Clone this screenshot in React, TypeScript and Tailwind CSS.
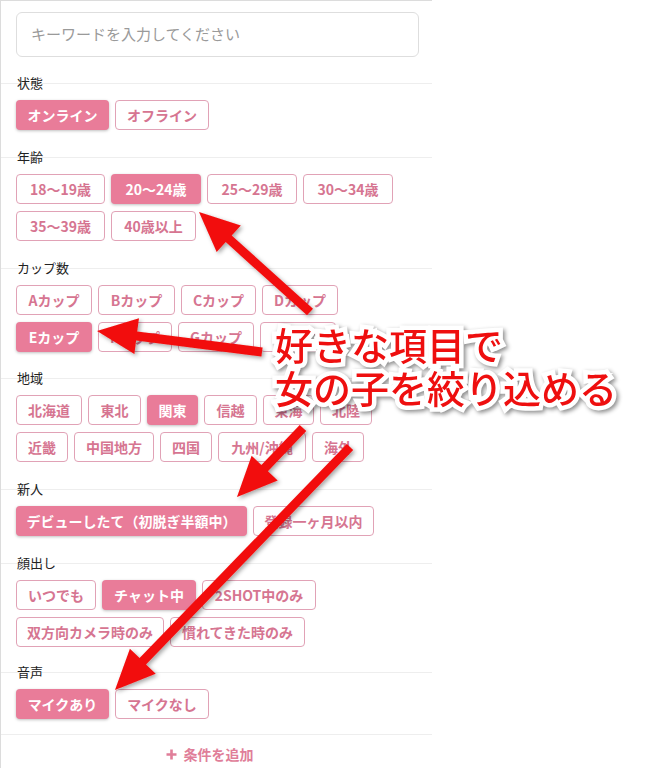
import React from "react";

type Btn = [string, string, boolean?];

const sections: { label: string; pb: string; rows: Btn[][] }[] = [
  {
    label: "状態",
    pb: "pb-[27px]",
    rows: [[["オンライン", "w-[93px]", true], ["オフライン", "w-[94px]"]]],
  },
  {
    label: "年齢",
    pb: "pb-[27px]",
    rows: [
      [
        ["18〜19歳", "w-[89px]"],
        ["20〜24歳", "w-[90px]", true],
        ["25〜29歳", "w-[90px]"],
        ["30〜34歳", "w-[90px]"],
      ],
      [
        ["35〜39歳", "w-[89px]"],
        ["40歳以上", "w-[85px]"],
      ],
    ],
  },
  {
    label: "カップ数",
    pb: "pb-[26px]",
    rows: [
      [
        ["Aカップ", "w-[76px]"],
        ["Bカップ", "w-[77px]"],
        ["Cカップ", "w-[75px]"],
        ["Dカップ", "w-[76px]"],
      ],
      [
        ["Eカップ", "w-[76px]", true],
        ["Fカップ", "w-[74px]"],
        ["Gカップ", "w-[76px]"],
        ["Hカップ", "w-[76px]"],
      ],
    ],
  },
  {
    label: "地域",
    pb: "pb-[27px]",
    rows: [
      [
        ["北海道", "w-[66px]"],
        ["東北", "w-[53px]"],
        ["関東", "w-[51px]", true],
        ["信越", "w-[53px]"],
        ["東海", "w-[51px]"],
        ["北陸", "w-[52px]"],
      ],
      [
        ["近畿", "w-[52px]"],
        ["中国地方", "w-[80px]"],
        ["四国", "w-[52px]"],
        ["九州/沖縄", "w-[88px]"],
        ["海外", "w-[52px]"],
      ],
    ],
  },
  {
    label: "新人",
    pb: "pb-[27px]",
    rows: [
      [
        ["デビューしたて（初脱ぎ半額中）", "w-[231px]", true],
        ["登録一ヶ月以内", "w-[121px]"],
      ],
    ],
  },
  {
    label: "顔出し",
    pb: "pb-[25px]",
    rows: [
      [
        ["いつでも", "w-[80px]"],
        ["チャット中", "w-[94px]", true],
        ["2SHOT中のみ", "w-[114px]"],
      ],
      [
        ["双方向カメラ時のみ", "w-[148px]"],
        ["慣れてきた時のみ", "w-[135px]"],
      ],
    ],
  },
  {
    label: "音声",
    pb: "pb-[15px]",
    rows: [[["マイクあり", "w-[93px]", true], ["マイクなし", "w-[94px]"]]],
  },
];

function arrowPoints(tx: number, ty: number, hx: number, hy: number) {
  const dx = hx - tx;
  const dy = hy - ty;
  const len = Math.hypot(dx, dy);
  const ux = dx / len;
  const uy = dy / len;
  const px = -uy;
  const py = ux;
  const w = 4.5;
  const H = 18;
  const L = 40;
  const bx = hx - ux * L;
  const by = hy - uy * L;
  const pts = [
    [tx + px * w, ty + py * w],
    [bx + px * w, by + py * w],
    [bx + px * H, by + py * H],
    [hx, hy],
    [bx - px * H, by - py * H],
    [bx - px * w, by - py * w],
    [tx - px * w, ty - py * w],
  ];
  return pts.map((p) => `${p[0].toFixed(1)},${p[1].toFixed(1)}`).join(" ");
}

const arrows = [
  [310, 312, 199, 212],
  [262, 352, 97, 331],
  [303, 428, 237, 497],
  [350, 447, 115, 690],
];

export default function App() {
  return (
    <div
      className="relative w-[656px] h-[768px] bg-white overflow-hidden"
      style={{ fontFamily: '"Noto Sans CJK JP", "Noto Sans", sans-serif' }}
    >
      <div className="w-[432px] h-[768px] border-l border-t border-[#dcdcdc] pt-[11px]">
        <div className="mx-[15px] w-[403px] h-[45px] rounded-[6px] border border-[#dedede] flex items-center px-[14px] text-[15px] text-[#9a9a9a]">
          キーワードを入力してください
        </div>
        <div className="mt-[26px]">
          {sections.map((s) => (
            <div key={s.label} className={`border-t border-[#eeeeee] ${s.pb}`}>
              <div className="-mt-[10px] h-[18px] leading-[17px] text-[13px] text-[#222] pl-[16px]">
                {s.label}
              </div>
              <div className="mt-[8px] px-[15px] flex flex-col gap-[7px]">
                {s.rows.map((row, i) => (
                  <div key={i} className="flex gap-[6px]">
                    {row.map(([t, w, active]) => (
                      <div
                        key={t}
                        className={
                          active
                            ? `${w} h-[30px] rounded-[4px] bg-[#e97c99] text-white text-[14px] font-bold flex items-center justify-center shadow-[0_1px_3px_rgba(0,0,0,0.25)] whitespace-nowrap`
                            : `${w} h-[30px] rounded-[4px] border border-[#e1a2b6] text-[#d67591] text-[14px] font-bold flex items-center justify-center whitespace-nowrap`
                        }
                      >
                        {t}
                      </div>
                    ))}
                  </div>
                ))}
              </div>
            </div>
          ))}
          <div className="border-t border-[#eeeeee] pt-[9px] flex items-center justify-center gap-[7px] text-[14px] leading-[20px] font-bold text-[#e07e99] pr-[14px]">
            <svg width="11" height="11" viewBox="0 0 11 11">
              <path d="M5.5 0.5v10M0.5 5.5h10" stroke="#e07e99" strokeWidth="2.6" />
            </svg>
            <span>条件を追加</span>
          </div>
        </div>
      </div>

      <svg
        className="absolute left-0 top-0 pointer-events-none"
        width="656"
        height="768"
        viewBox="0 0 656 768"
      >
        <defs>
          <filter id="sh" x="-20%" y="-20%" width="140%" height="140%">
            <feDropShadow dx="2" dy="2" stdDeviation="2" floodColor="#000" floodOpacity="0.35" />
          </filter>
        </defs>
        {arrows.map((a, i) => (
          <polygon key={i} points={arrowPoints(a[0], a[1], a[2], a[3])} fill="#f20d0d" filter="url(#sh)" />
        ))}
      </svg>

      <div className="absolute left-[275px] top-[322px] text-[38px] leading-[43px] font-medium text-[#ee0f0f] whitespace-nowrap [paint-order:stroke_fill] [-webkit-text-stroke:9px_white] drop-shadow-[2px_2px_2px_rgba(0,0,0,0.45)]">
        <div>好きな項目で</div>
        <div>女の子を絞り込める</div>
      </div>
    </div>
  );
}
